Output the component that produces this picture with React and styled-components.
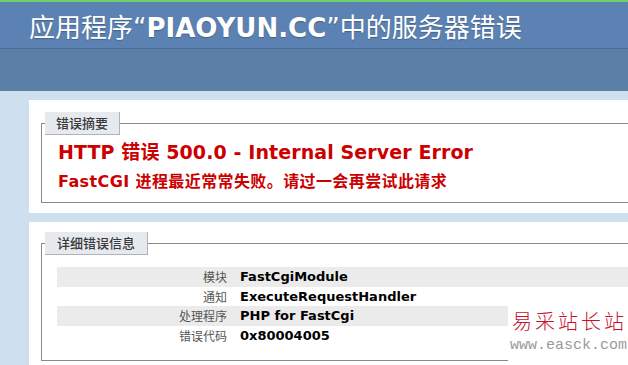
import styled, { createGlobalStyle } from 'styled-components'

const GlobalStyle = createGlobalStyle`
	html, body {
		margin: 0;
		padding: 0;
		background-color: #cee0f0;
		overflow: hidden;
		font-family: "DejaVu Sans", Verdana, "Noto Sans CJK SC", sans-serif;
	}
`

const Page = styled.div`
	position: relative;
	width: 628px;
	height: 365px;
	overflow: hidden;
`

const Header = styled.div`
	border-top: 2px solid #6fd36a;
	background-color: #5b82b2;
	height: 46px;
	display: flex;
	align-items: center;
	padding-left: 29px;
`

const Title = styled.h1`
	margin: 0;
	color: #ffffff;
	font-size: 26px;
	font-weight: normal;
	font-family: "DejaVu Sans", "Noto Sans CJK SC", sans-serif;
	white-space: nowrap;
	text-shadow: 0 1px 1px rgba(0, 0, 0, 0.25);

	b {
		font-weight: bold;
	}
`

const SubBar = styled.div`
	height: 42px;
	background-color: #5b7fa6;
	border-top: 1px solid #4a6b93;
`

const Content = styled.div`
	width: 720px;
	padding: 9px 0 0 29px;
	display: flex;
	flex-direction: column;
	gap: 9px;
`

const Panel = styled.div`
	background-color: #ffffff;
	padding: ${p => p.$top}px 0 10px 12px;
`

const Box = styled.fieldset`
	margin: 0;
	border: 1px solid #8a8a8a;
	border-right: none;
	padding: 0 0 ${p => p.$bottom}px 3px;
	min-width: 0;
`

const Legend = styled.legend`
	background-color: #e6eaee;
	border-right: 1px solid #b0b4b8;
	border-bottom: 1px solid #b0b4b8;
	padding: 0 ${p => p.$pad || 12}px;
	height: 22px;
	line-height: 22px;
	font-size: 13px;
	color: #3a3a3a;
	font-family: "Noto Sans CJK SC", sans-serif;
	font-weight: 500;
`

const Heading = styled.h2`
	margin: 6px 0 0 13px;
	color: #cc0000;
	font-size: 19px;
	line-height: 22px;
	font-weight: bold;
	white-space: nowrap;
	letter-spacing: 0.1px;
`

const SubHeading = styled.h3`
	margin: 9px 0 0 13px;
	color: #cc0000;
	font-size: 16px;
	line-height: 20px;
	font-weight: bold;
	white-space: nowrap;
	letter-spacing: 0.4px;
	font-family: "DejaVu Sans", "Noto Sans CJK SC", sans-serif;
`

const Table = styled.div`
	margin: 12px 0 0 12px;
	display: flex;
	flex-direction: column;
`

const Row = styled.div`
	display: grid;
	grid-template-columns: 170px 1fr;
	column-gap: 13px;
	height: 19.5px;
	align-items: center;
	background-color: ${p => (p.$shaded ? '#ebebeb' : 'transparent')};
`

const Label = styled.span`
	text-align: right;
	font-size: 12px;
	color: #555;
	font-family: "Noto Sans CJK SC", sans-serif;
`

const Value = styled.span`
	font-size: 13px;
	font-weight: bold;
	color: #000;
`

const Watermark = styled.div`
	position: absolute;
	left: 508px;
	top: 304px;
	width: 120px;
	height: 61px;
	background-color: #ffffff;
	display: flex;
	flex-direction: column;
	padding: 2px 0 0 4px;
	box-sizing: border-box;
`

const MarkName = styled.div`
	color: #c8102e;
	font-family: "Noto Sans CJK SC", serif;
	font-weight: 300;
	font-size: 20px;
	letter-spacing: 3px;
	line-height: 30px;
	white-space: nowrap;
`

const MarkUrl = styled.div`
	color: #9a9a9a;
	font-family: "Liberation Mono", monospace;
	font-size: 15px;
	line-height: 20px;
	white-space: nowrap;
	margin-left: -2px;
`

const details = [
	{ label: '模块', value: 'FastCgiModule' },
	{ label: '通知', value: 'ExecuteRequestHandler' },
	{ label: '处理程序', value: 'PHP for FastCgi' },
	{ label: '错误代码', value: '0x80004005' },
]

const App = () => {
	return (
		<Page>
			<GlobalStyle />
			<Header>
				<Title>应用程序“<b>PIAOYUN.CC</b>”中的服务器错误</Title>
			</Header>
			<SubBar />
			<Content>
				<Panel $top={12}>
					<Box $bottom={10}>
						<Legend $pad={11}>错误摘要</Legend>
						<Heading>HTTP 错误 500.0 - Internal Server Error</Heading>
						<SubHeading>FastCGI 进程最近常常失败。请过一会再尝试此请求</SubHeading>
					</Box>
				</Panel>
				<Panel $top={10}>
					<Box $bottom={15}>
						<Legend>详细错误信息</Legend>
						<Table>
							{details.map((d, i) => (
								<Row key={d.label} $shaded={i % 2 === 0}>
									<Label>{d.label}</Label>
									<Value>{d.value}</Value>
								</Row>
							))}
						</Table>
					</Box>
				</Panel>
			</Content>
			<Watermark>
				<MarkName>易采站长站</MarkName>
				<MarkUrl>www.easck.com</MarkUrl>
			</Watermark>
		</Page>
	)
}

export default App
